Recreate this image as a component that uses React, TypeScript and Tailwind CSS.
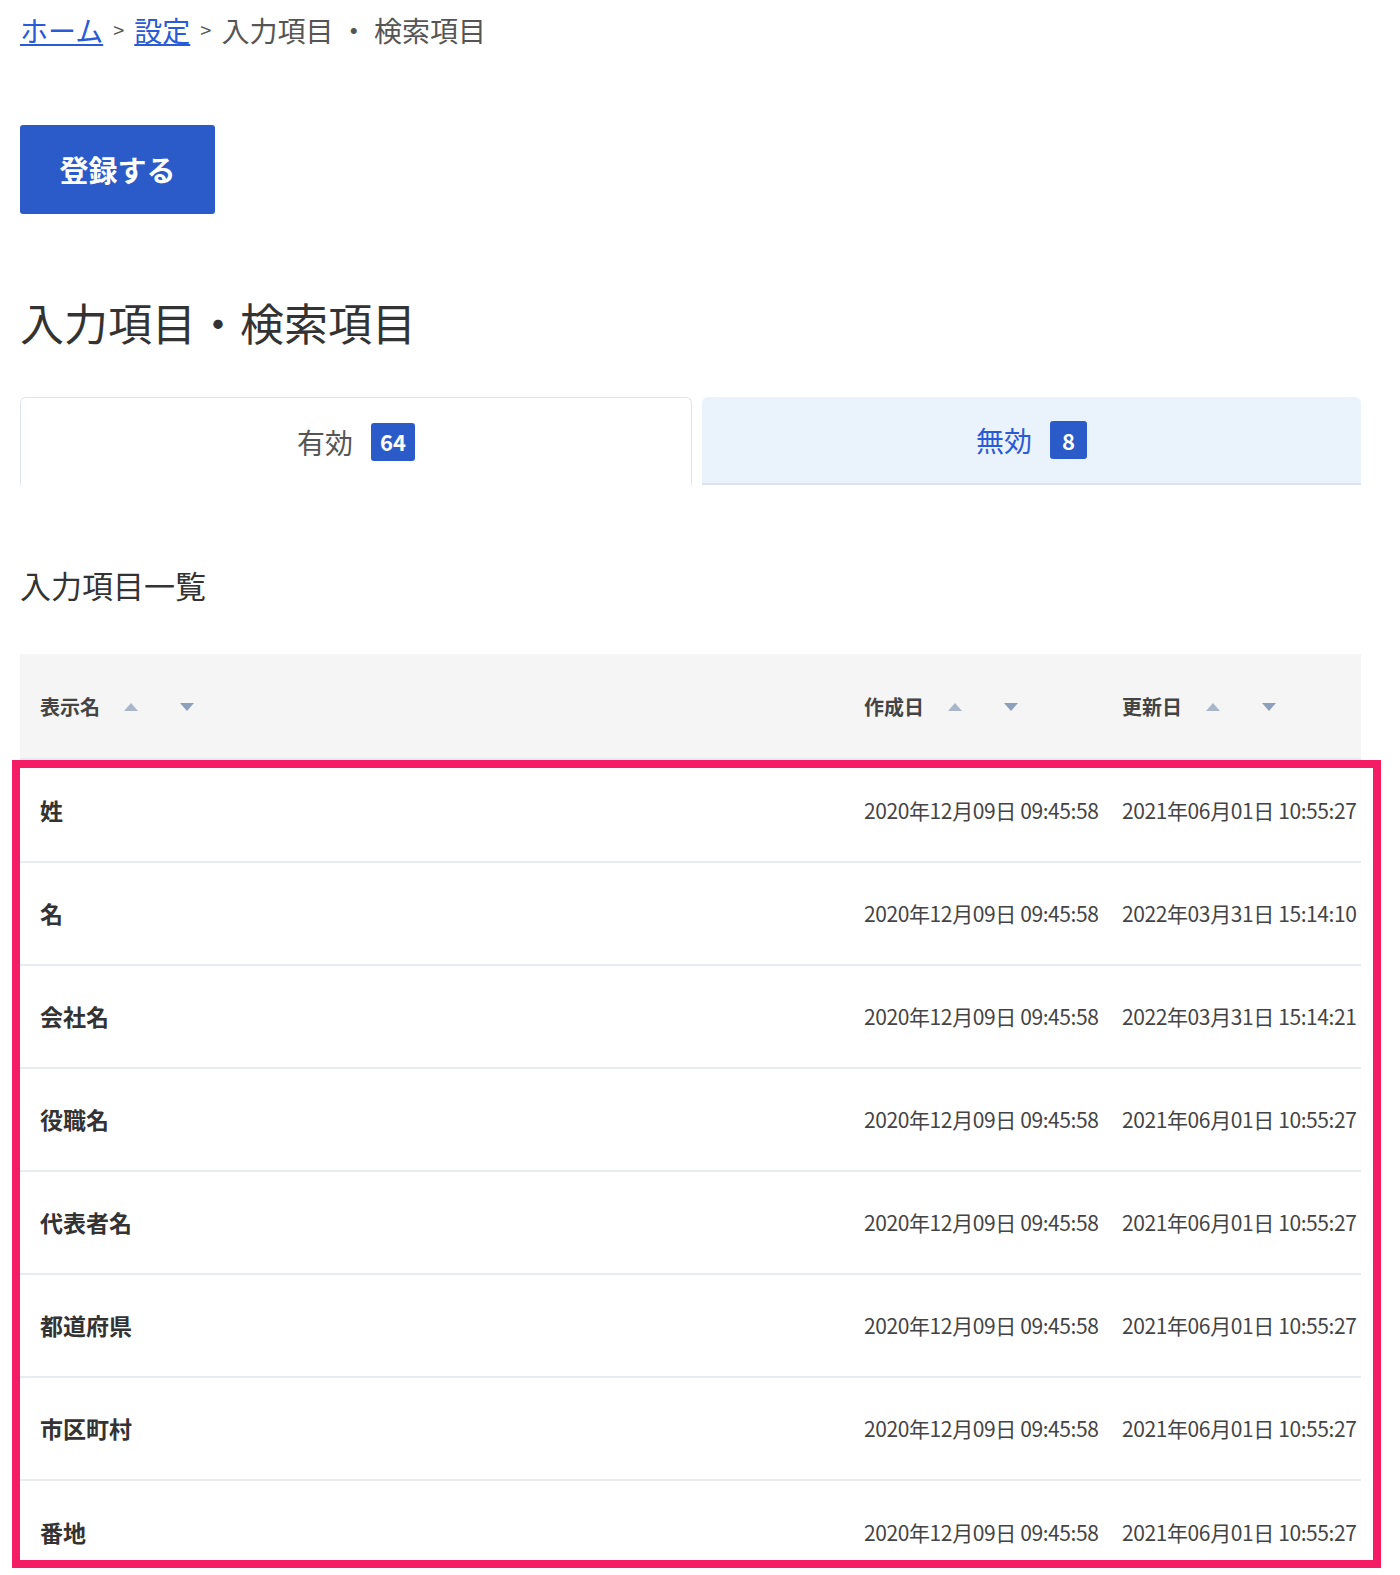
import React from "react";

const rows = [
  ["姓", "2021年06月01日 10:55:27"],
  ["名", "2022年03月31日 15:14:10"],
  ["会社名", "2022年03月31日 15:14:21"],
  ["役職名", "2021年06月01日 10:55:27"],
  ["代表者名", "2021年06月01日 10:55:27"],
  ["都道府県", "2021年06月01日 10:55:27"],
  ["市区町村", "2021年06月01日 10:55:27"],
  ["番地", "2021年06月01日 10:55:27"],
];

const Sort = () => (
  <span className="flex items-center gap-[42px] ml-[24px]">
    <svg width="14" height="8" viewBox="0 0 14 8"><path d="M7 0L14 8H0Z" fill="#a9b6c9" /></svg>
    <svg width="14" height="8" viewBox="0 0 14 8"><path d="M0 0H14L7 8Z" fill="#8da0bb" /></svg>
  </span>
);

export default function App() {
  return (
    <div className="w-[1400px] h-[1575px] bg-white overflow-hidden" style={{ fontFamily: '"Noto Sans CJK JP", "Noto Sans", sans-serif' }}>
      <div className="pl-[20px] pr-[39px]">
        <div className="pt-[8px] h-[52px] text-[28px] text-[#555] flex items-center gap-[10px]">
          <a className="text-[#2a5bd7] underline">ホーム</a>
          <span className="text-[20px]">&gt;</span>
          <a className="text-[#2a5bd7] underline">設定</a>
          <span className="text-[20px]">&gt;</span>
          <span>入力項目 ・ 検索項目</span>
        </div>
        <div className="mt-[73px] w-[195px] h-[89px] bg-[#2a5bc8] rounded-[3px] flex items-center justify-center text-white text-[29px] font-bold">
          登録する
        </div>
        <h1 className="mt-[78px] text-[44px] text-[#333] leading-[60px]">入力項目・検索項目</h1>
        <div className="mt-[45px] flex gap-[10px] h-[88px]">
          <div className="flex-[668] border border-b-0 border-[#dde3ea] rounded-t-[6px] bg-white flex items-center justify-center gap-[18px]">
            <span className="text-[28px] text-[#555]">有効</span>
            <span className="bg-[#2a5bc8] text-white font-bold text-[22px] rounded-[3px] px-[9px] h-[38px] flex items-center">64</span>
          </div>
          <div className="flex-[657] bg-[#eaf2fc] border-b-2 border-[#dde3ea] rounded-t-[6px] flex items-center justify-center gap-[18px]">
            <span className="text-[28px] text-[#2a5bd7]">無効</span>
            <span className="bg-[#2a5bc8] text-white font-bold text-[22px] rounded-[3px] px-[12px] h-[38px] flex items-center">8</span>
          </div>
        </div>
        <h2 className="mt-[80px] text-[31px] text-[#333] leading-[40px]">入力項目一覧</h2>
        <div className="mt-[49px]">
          <div className="h-[106px] bg-[#f6f5f6] border-b-2 border-[#e8ecf0] flex items-center text-[20px] font-bold text-[#444] pt-[2px]">
            <div className="flex-1 pl-[20px] flex items-center">表示名<Sort /></div>
            <div className="w-[258px] flex items-center">作成日<Sort /></div>
            <div className="w-[239px] flex items-center">更新日<Sort /></div>
          </div>
          <div className="relative">
            <div className="absolute left-[-8px] right-[-20px] top-[0px] h-[808px] border-[8px] border-[#f51c66] pointer-events-none" />
            {rows.map(([n, u], i) => (
              <div key={i} className={`h-[103px] flex items-center text-[#333] ${i < rows.length - 1 ? "border-b-2 border-[#e8ecf0]" : ""}`}>
                <div className="flex-1 pl-[20px] text-[23px] font-bold">{n}</div>
                <div className="w-[258px] text-[21px] tracking-[-0.4px] text-[#444] whitespace-nowrap">2020年12月09日 09:45:58</div>
                <div className="w-[239px] text-[21px] tracking-[-0.4px] text-[#444] whitespace-nowrap">{u}</div>
              </div>
            ))}
          </div>
        </div>
      </div>
    </div>
  );
}
